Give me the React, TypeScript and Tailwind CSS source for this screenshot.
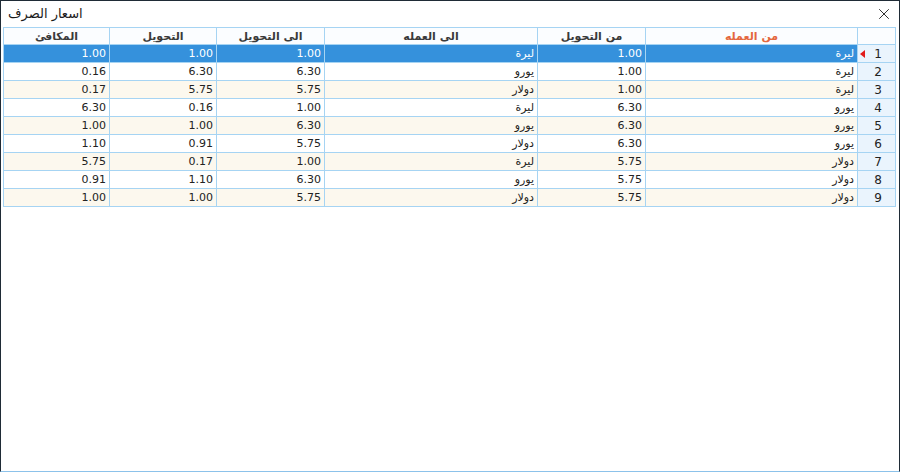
import { X } from "lucide-react"

type Row = [string, string, string, string, string, string]

const rows: Row[] = [
  ["ليرة", "1.00", "ليرة", "1.00", "1.00", "1.00"],
  ["ليرة", "1.00", "يورو", "6.30", "6.30", "0.16"],
  ["ليرة", "1.00", "دولار", "5.75", "5.75", "0.17"],
  ["يورو", "6.30", "ليرة", "1.00", "0.16", "6.30"],
  ["يورو", "6.30", "يورو", "6.30", "1.00", "1.00"],
  ["يورو", "6.30", "دولار", "5.75", "0.91", "1.10"],
  ["دولار", "5.75", "ليرة", "1.00", "0.17", "5.75"],
  ["دولار", "5.75", "يورو", "6.30", "1.10", "0.91"],
  ["دولار", "5.75", "دولار", "5.75", "1.00", "1.00"],
]

const headers = ["من العمله", "من التحويل", "الى العمله", "الى التحويل", "التحويل", "المكافئ"]
const widths = ["w-[212px]", "w-[108px]", "w-[213px]", "w-[108px]", "w-[107px]", "w-[106px]"]

export default function App() {
  return (
    <div
      className="w-[900px] h-[472px] bg-white border-x border-t border-x-[#1f2b36] border-t-[#1f2b36] border-b border-b-[#8cc2ea] flex flex-col overflow-hidden"
      style={{ fontFamily: '"DejaVu Sans", sans-serif' }}
    >
      {/* Title bar */}
      <div className="h-[25px] flex items-center justify-between pl-[7px] pr-[6px] shrink-0">
        <span className="text-[13px] text-[#1a1a1a] pt-px">اسعار الصرف</span>
        <X className="w-[18px] h-[18px] text-[#1a1a1a]" strokeWidth={1.2} />
      </div>

      {/* Grid */}
      <div className="px-[2px] pt-px">
        <table dir="rtl" className="table-fixed border-collapse border border-[#9fd0f2] w-[893px] text-[11px] leading-none">
          <thead>
            <tr className="h-[17px] bg-[#fbfdff]">
              <th className="w-[38px] border border-[#a6d4f3]" />
              {headers.map((h, i) => (
                <th
                  key={h}
                  className={`${widths[i]} border border-[#a6d4f3] font-bold text-center ${i === 0 ? "text-[#e4683f]" : "text-[#3a3a3a]"}`}
                >
                  {h}
                </th>
              ))}
            </tr>
          </thead>
          <tbody>
            {rows.map((r, idx) => {
              const selected = idx === 0
              const stripe = idx % 2 === 0 ? "bg-[#fcf8ee]" : "bg-white"
              return (
                <tr key={idx} className="h-[18px]">
                  <td className="border border-[#a6d4f3] bg-[#eaf4fd] text-[#222] text-[12px]">
                    <div className="relative flex justify-center">
                      {selected && (
                        <span className="absolute left-[2px] top-[2px] w-0 h-0 border-y-[4px] border-y-transparent border-r-[5px] border-r-[#e21b1b]" />
                      )}
                      <span className="pl-[3px]">{idx + 1}</span>
                    </div>
                  </td>
                  {r.map((c, j) => (
                    <td
                      key={j}
                      className={`border border-[#a6d4f3] text-right px-[3px] whitespace-nowrap ${
                        selected ? "bg-[#3591dc] text-white" : `${stripe} text-[#222]`
                      }`}
                    >
                      {j === 0 || j === 2 ? c : <span dir="ltr">{c}</span>}
                    </td>
                  ))}
                </tr>
              )
            })}
          </tbody>
        </table>
      </div>
    </div>
  )
}
